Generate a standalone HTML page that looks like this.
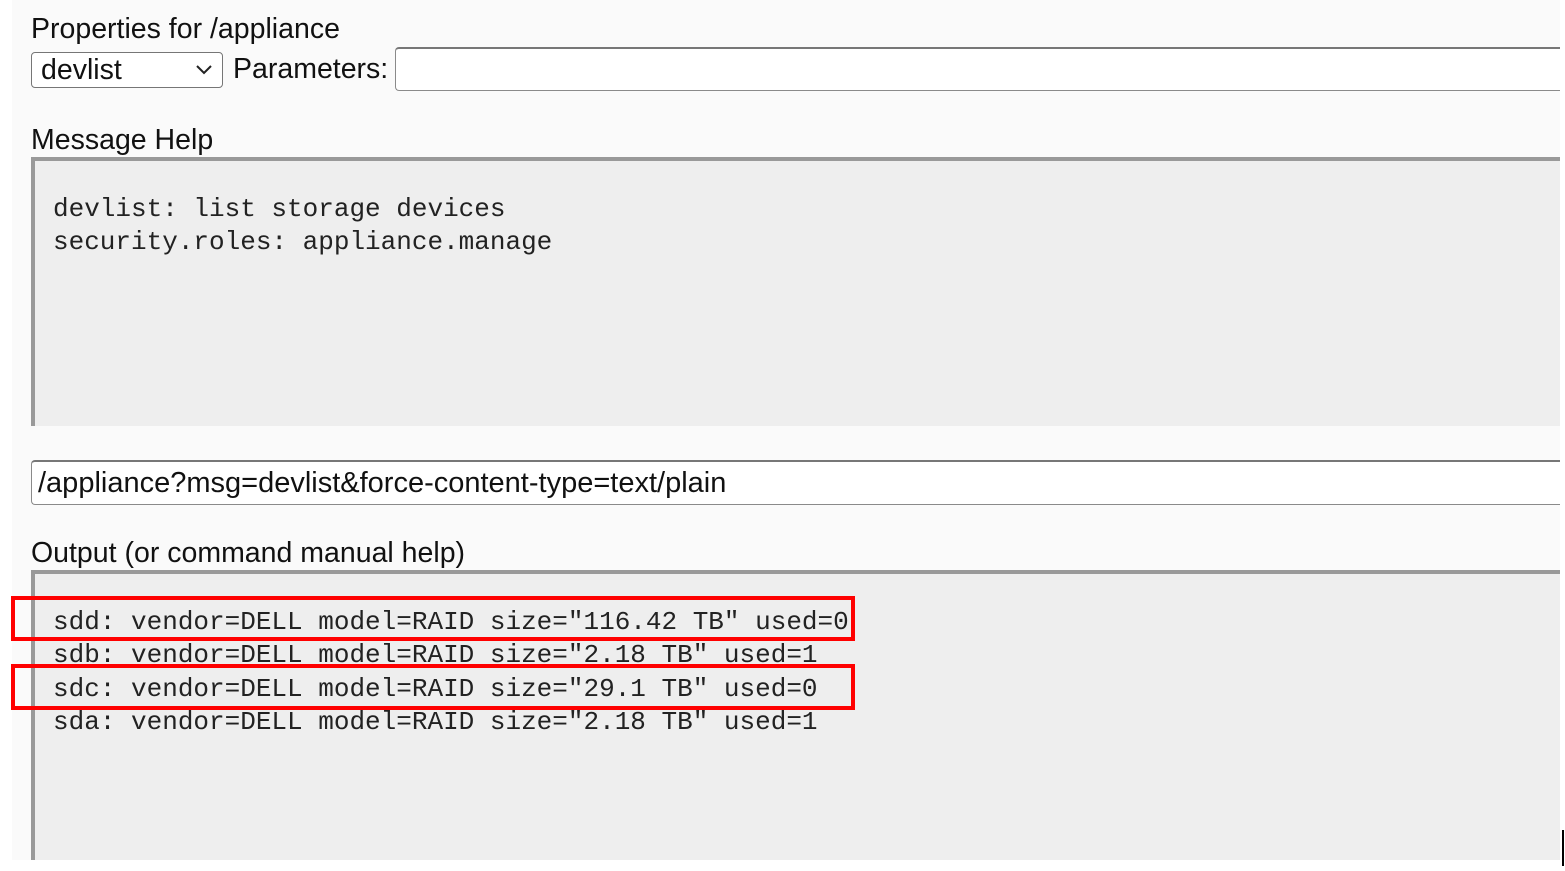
<!DOCTYPE html>
<html><head><meta charset="utf-8"><style>
html,body{margin:0;padding:0;background:#fff;width:1565px;height:871px;overflow:hidden;position:relative;font-family:"Liberation Sans",Arial,sans-serif;color:#111}
.bg{position:absolute;left:12px;top:0;width:1548px;height:860px;background:#fafafa}
.lbl{position:absolute;font-size:28.5px;line-height:32px;white-space:nowrap}
.sel{position:absolute;left:31px;top:52px;width:192px;height:36px;border:1px solid #767676;border-radius:4px;background:#fff;box-sizing:border-box}
.inp{position:absolute;border:1px solid #8a8a8a;border-top:2px solid #777;border-radius:4px 0 0 4px;background:#fff;box-sizing:border-box;border-right:none}
.ta{position:absolute;left:31px;width:1529px;background:#eee;border-top:4px solid #999;border-left:4px solid #999;box-sizing:border-box}
.mono{position:absolute;left:53px;font-family:"Liberation Mono","DejaVu Sans Mono",monospace;font-size:26px;line-height:33.3px;white-space:pre;color:#222}
.red{position:absolute;left:11px;width:844px;border:4px solid #f00;box-sizing:border-box}
</style></head><body>
<div class="bg"></div>
<div class="lbl" style="left:31px;top:13px">Properties for /appliance</div>
<div class="sel"><span style="position:absolute;left:9px;top:1px;font-size:28.5px;line-height:32px">devlist</span>
<svg style="position:absolute;left:163px;top:11px" width="18" height="12" viewBox="0 0 18 12"><path d="M2 2 L9 9 L16 2" fill="none" stroke="#222" stroke-width="2"/></svg></div>
<div class="lbl" style="left:233px;top:53px">Parameters:</div>
<div class="inp" style="left:395px;top:47px;width:1165px;height:44px"></div>
<div class="lbl" style="left:31px;top:124px">Message Help</div>
<div class="ta" style="top:157px;height:269px"></div>
<div class="mono" style="top:193px">devlist: list storage devices
security.roles: appliance.manage</div>
<div class="inp" style="left:31px;top:460px;width:1529px;height:45px"><span style="position:absolute;left:6px;top:5px;font-size:29px;line-height:32px">/appliance?msg=devlist&amp;force-content-type=text/plain</span></div>
<div class="lbl" style="left:31px;top:537px">Output (or command manual help)</div>
<div class="ta" style="top:570px;height:290px"></div>
<div class="mono" style="top:606px">sdd: vendor=DELL model=RAID size="116.42 TB" used=0
sdb: vendor=DELL model=RAID size="2.18 TB" used=1
sdc: vendor=DELL model=RAID size="29.1 TB" used=0
sda: vendor=DELL model=RAID size="2.18 TB" used=1</div>
<div class="red" style="top:596px;height:45px"></div>
<div class="red" style="top:664px;height:46px"></div>
<div style="position:absolute;left:1562px;top:830px;width:2px;height:36px;background:#000"></div>
</body></html>
